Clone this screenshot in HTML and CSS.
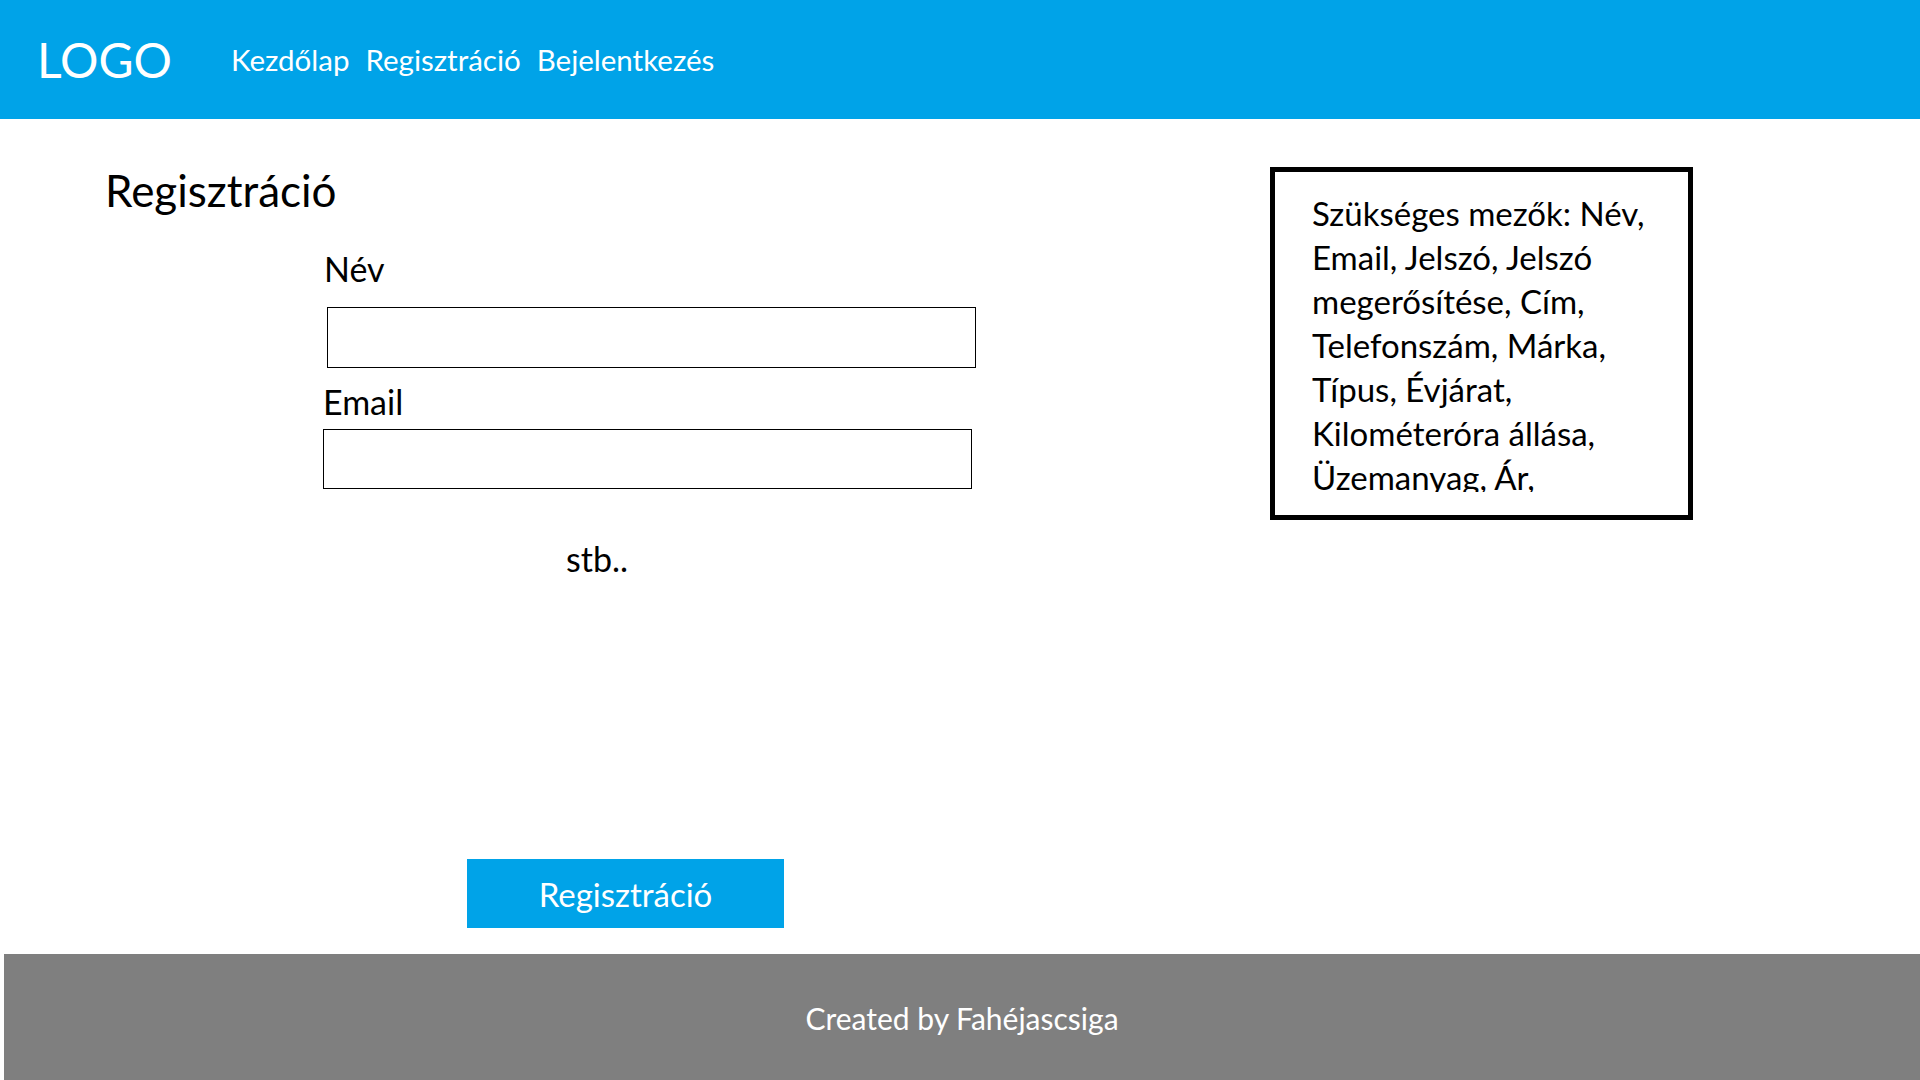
FILE: index.html
```html
<!DOCTYPE html>
<html lang="hu">
<head>
<meta charset="utf-8">
<title>Regisztráció</title>
<link rel="stylesheet" href="styles.css">
</head>
<body>
<header class="topbar">
  <div class="logo">LOGO</div>
  <nav class="nav">
    <a class="nav-link" href="#">Kezdőlap</a>
    <a class="nav-link" href="#">Regisztráció</a>
    <a class="nav-link" href="#">Bejelentkezés</a>
  </nav>
</header>
<main class="content">
  <section class="main-col">
    <h1 class="title">Regisztráció</h1>
    <form class="form">
      <label class="label label-name">Név</label>
      <div class="field field-name"></div>
      <label class="label label-email">Email</label>
      <div class="field field-email"></div>
      <p class="etc">stb..</p>
      <div class="btn">Regisztráció</div>
    </form>
  </section>
  <aside class="notes">
    <div class="notes-text">Szükséges mezők: Név, Email, Jelszó, Jelszó megerősítése, Cím, Telefonszám, Márka, Típus, Évjárat, Kilométeróra állása, Üzemanyag, Ár,</div>
  </aside>
</main>
<footer class="footer">Created by Fahéjascsiga</footer>
</body>
</html>
```
FILE: styles.css
```css
* { box-sizing: border-box; }
html, body { margin: 0; padding: 0; }
body {
  width: 1920px;
  height: 1080px;
  display: flex;
  flex-direction: column;
  font-family: Lato, "Open Sans", sans-serif;
  color: #000;
  background: #fff;
  overflow: hidden;
}
.topbar {
  height: 119px;
  flex: 0 0 119px;
  background: #00a3e8;
  display: flex;
  align-items: center;
  padding-left: 37px;
  color: #fff;
}
.logo {
  font-size: 48px;
  line-height: 58px;
  margin-right: 59px;
}
.nav {
  display: flex;
  gap: 16px;
  padding-top: 0;
}
.nav-link {
  color: #fff;
  text-decoration: none;
  font-size: 29.5px;
  line-height: 34px;
}
.content {
  flex: 1;
  display: flex;
}
.main-col {
  flex: 0 0 1270px;
  padding-left: 105px;
}
.title {
  margin: 48px 0 0 0;
  font-size: 44px;
  line-height: 47px;
  font-weight: 400;
}
.form {
  margin-left: 218px;
  display: flex;
  flex-direction: column;
  align-items: flex-start;
}
.label {
  display: block;
  font-size: 34px;
  line-height: 37px;
}
.label-name { margin-top: 36px; margin-left: 1px; }
.label-email { margin-top: 15px; }
.field {
  border: 1px solid #000;
  width: 649px;
  background: #fff;
}
.field-name { margin-top: 20px; margin-left: 4px; height: 61px; }
.field-email { margin-top: 9px; height: 60px; }
.etc {
  margin: 51px 0 0 243px;
  font-size: 34px;
  line-height: 37px;
}
.btn {
  margin: 282px 0 0 144px;
  width: 317px;
  height: 69px;
  background: #00a3e8;
  color: #fff;
  font-size: 33px;
  display: flex;
  align-items: center;
  justify-content: center;
}
.notes {
  margin-top: 48px;
  width: 423px;
  height: 353px;
  border: 5px solid #000;
  padding: 19px 0 0 37px;
}
.notes-text {
  width: 375px;
  height: 301px;
  overflow: hidden;
  font-size: 33px;
  line-height: 44px;
}
.footer {
  flex: 0 0 126px;
  margin-left: 4px;
  background: #7f7f7f;
  color: #fff;
  font-size: 30px;
  display: flex;
  align-items: center;
  justify-content: center;
  padding-top: 2px;
}
```
